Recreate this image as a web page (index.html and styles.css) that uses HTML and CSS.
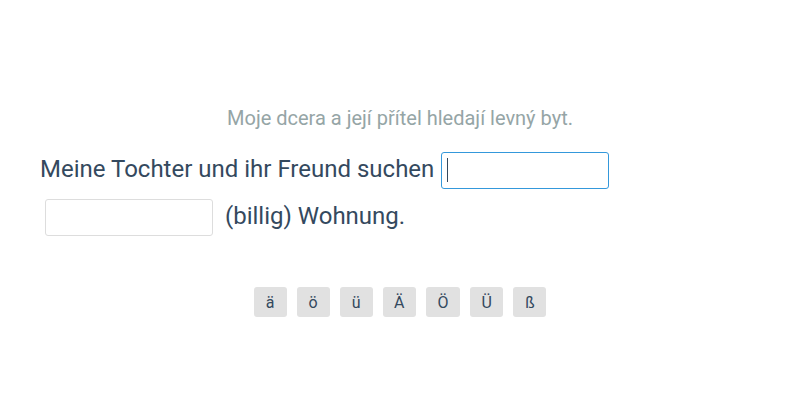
FILE: index.html
```html
<!DOCTYPE html>
<html lang="de">
<head>
  <meta charset="UTF-8">
  <meta name="viewport" content="width=device-width,initial-scale=1.0">
  <title>Übung</title>
  <link rel="stylesheet" href="styles.css">
</head>
<body>
  <div class="exercise">
    <p class="hint">Moje dcera a její přítel hledají levný byt.</p>
    <p class="sentence">Meine Tochter und ihr Freund suchen<span class="field"><input type="text" class="gap active" autofocus><span class="caret"></span></span><br><input type="text" class="gap"> (billig) Wohnung.</p>
    <div class="keys">
      <button>ä</button>
      <button>ö</button>
      <button>ü</button>
      <button>Ä</button>
      <button>Ö</button>
      <button>Ü</button>
      <button>ß</button>
    </div>
  </div>
</body>
</html>
```

FILE: styles.css
```css
body { margin: 0; background: #fff; font-family: Roboto, "Liberation Sans", sans-serif; color: #34495e; }
.exercise { padding: 105px 40px 0; }
.hint { margin: 0; text-align: center; font-size: 20px; line-height: 26px; color: #95a5a6; }
.sentence { margin: 15px 0 0; font-size: 24px; line-height: 47px; }
.field { position: relative; }
.gap { width: 168px; height: 37px; box-sizing: border-box; margin: 0 6px 0 5px; padding: 0 6px; vertical-align: middle; border: 1px solid #ddd; border-radius: 3px; font: inherit; font-size: 18px; color: #34495e; caret-color: transparent; outline: none; }
.gap.active { margin-left: 7px; border-color: #3498db; }
.caret { position: absolute; left: 13px; top: 3px; width: 1px; height: 24px; background: #34495e; }
.keys { display: flex; justify-content: center; gap: 10px; margin-top: 47px; }
.keys button { min-width: 33px; height: 30px; padding: 0 11.5px; border: none; border-radius: 3px; background: #e1e1e1; color: #34495e; font-family: Roboto, "Liberation Sans", sans-serif; font-size: 16px; cursor: pointer; }
```
